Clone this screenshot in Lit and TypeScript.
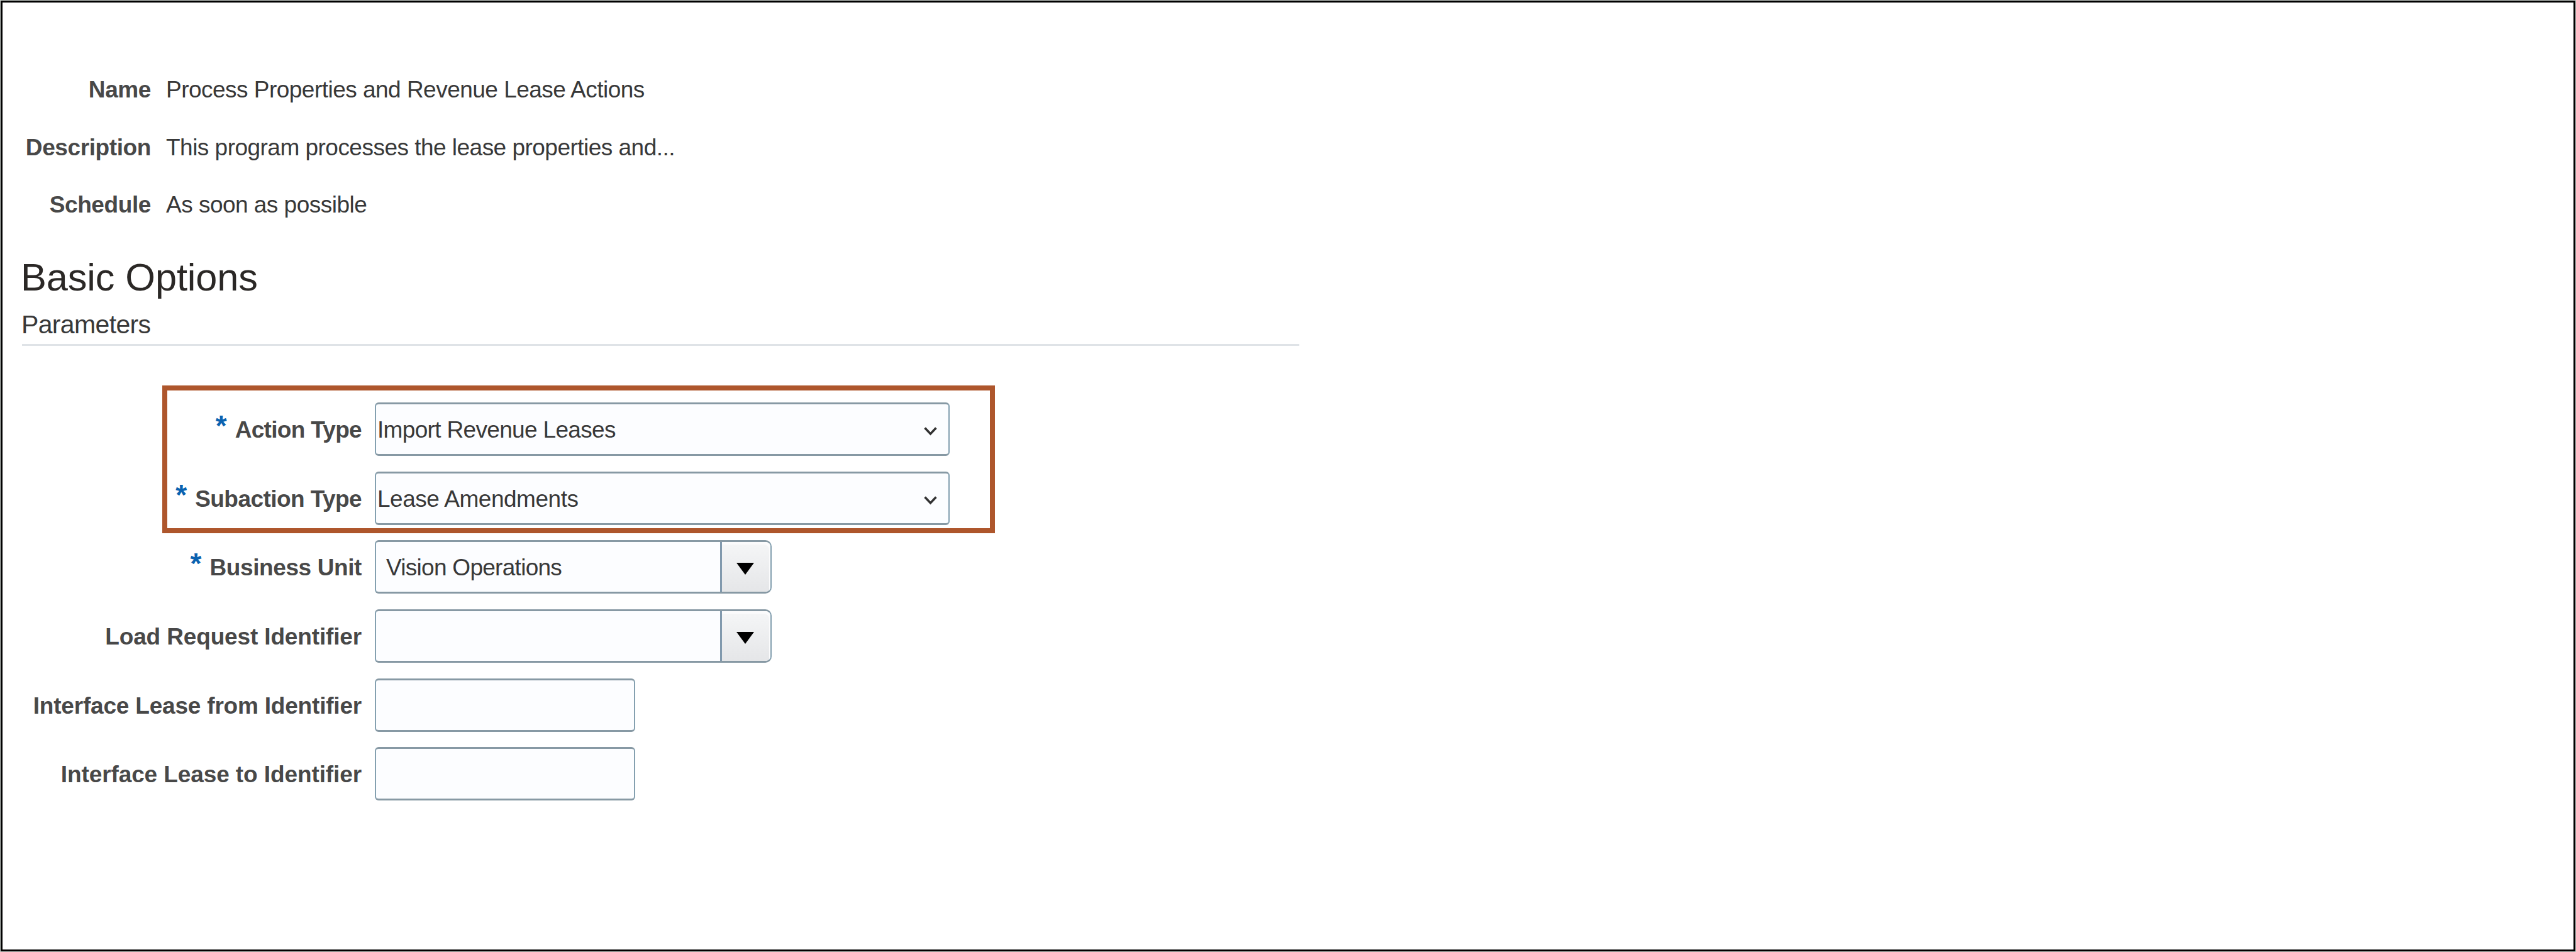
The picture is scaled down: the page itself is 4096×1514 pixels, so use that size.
import { html, css, svg, LitElement, nothing } from 'lit'
import { customElement, property } from 'lit/decorators.js'
import { styleMap } from 'lit/directives/style-map.js'

type Field = {
  label: string
  kind: 'select' | 'combo' | 'input'
  value?: string
  required?: boolean
  tracking: [label: number, value: number] // letter spacing in px
}

const summary = [
  { label: 'Name', value: 'Process Properties and Revenue Lease Actions' },
  { label: 'Description', value: 'This program processes the lease properties and...' },
  { label: 'Schedule', value: 'As soon as possible' }
]

const fields: Field[] = [
  { label: 'Action Type', kind: 'select', value: 'Import Revenue Leases', required: true, tracking: [-0.7, -0.67] },
  { label: 'Subaction Type', kind: 'select', value: 'Lease Amendments', required: true, tracking: [-0.57, -0.47] },
  { label: 'Business Unit', kind: 'combo', value: 'Vision Operations', required: true, tracking: [-0.4, -0.72] },
  { label: 'Load Request Identifier', kind: 'combo', tracking: [-0.15, 0] },
  { label: 'Interface Lease from Identifier', kind: 'input', tracking: [-0.2, 0] },
  { label: 'Interface Lease to Identifier', kind: 'input', tracking: [-0.1, 0] }
]

const chevron = svg`<path d="M1.6 1.6 L10.5 11 L19.4 1.6" fill="none" stroke="#333" stroke-width="3.6" />`
const triangle = svg`<path d="M0 0 H28 L14 19 Z" fill="#000" />`

@customElement('form-field')
export class FormField extends LitElement {
  @property() label = ''
  @property() kind = 'input'
  @property() value = ''
  @property({ type: Boolean }) required = false
  @property({ type: Array }) tracking = [0, 0]

  static styles = css`
    :host {
      display: grid;
      grid-template-columns: 540px auto;
      justify-content: start;
      column-gap: 21px;
      height: 85px;
      line-height: 87px;
      white-space: nowrap;
    }

    .label {
      display: flex;
      justify-content: flex-end;
      color: #484848;
      font-weight: bold;
    }

    .star {
      margin-right: 13px;
      color: #0a62b0;
      font-size: 46px;
      line-height: 74px;
      letter-spacing: 0;
    }

    .control {
      display: flex;
      box-sizing: border-box;
      height: 85px;
      line-height: 81px;
      border: 2px solid #84a0b0;
      border-width: 3px 2px;
      border-color: #8799a4 #84a0b0;
      border-radius: 6px;
      background: #fcfdff;
      color: #383838;
    }

    .control.select {
      width: 914px;
      padding: 0 18px 0 2px;
      justify-content: space-between;
    }

    .control.combo {
      width: 631px;
      border-radius: 6px 10px 10px 6px;
    }

    .control.input {
      width: 414px;
    }

    .control.combo .text {
      flex: 1;
      padding-left: 16px;
    }

    .drop {
      display: flex;
      align-items: center;
      justify-content: center;
      box-sizing: border-box;
      width: 80px;
      height: 79px;
      padding: 6px 4px 0 0;
      border-left: 3px solid #8199ad;
      border-radius: 0 8px 8px 0;
      background: linear-gradient(#f5f6f7, #e5e6e8);
      box-shadow: inset -2px 4px 0 #fbfbfc;
    }

    svg {
      display: block;
    }

    .chevron {
      margin-top: 36px;
    }
  `

  renderControl() {
    const text = html`<span class="text" style=${styleMap({ letterSpacing: `${this.tracking[1]}px` })}>${this.value}</span>`
    if (this.kind === 'select') {
      return html`
        <div class="control select">
          ${text}
          <svg class="chevron" width="21" height="14" viewBox="0 0 21 14">${chevron}</svg>
        </div>
      `
    }
    if (this.kind === 'combo') {
      return html`
        <div class="control combo">
          ${text}
          <span class="drop"><svg width="28" height="19" viewBox="0 0 28 19">${triangle}</svg></span>
        </div>
      `
    }
    return html`<div class="control input">${this.value}</div>`
  }

  render() {
    return html`
      <div class="label">
        ${this.required ? html`<span class="star">*</span>` : nothing}
        <span style=${styleMap({ letterSpacing: `${this.tracking[0]}px` })}>${this.label}</span>
      </div>
      ${this.renderControl()}
    `
  }
}

@customElement('app-root')
export class AppRoot extends LitElement {
  static styles = css`
    :host {
      display: block;
      box-sizing: border-box;
      height: 1514px;
      border: 1px solid #c6ccc8;
      background: #fff;
      color: #383838;
      font: 37px 'Liberation Sans', Arial, sans-serif;
    }

    .page {
      box-sizing: border-box;
      height: 100%;
      padding: 93px 31px 0;
      border: 3px solid #000;
    }

    .summary {
      display: grid;
      grid-template-columns: 205px auto;
      grid-template-rows: 92px 92px 90px;
      column-gap: 24px;
      align-items: center;
      justify-content: start;
      margin: 0;
      white-space: nowrap;
    }

    dt {
      color: #484848;
      font-weight: bold;
      letter-spacing: -0.4px;
      text-align: right;
    }

    dd {
      margin: 0;
      letter-spacing: -0.52px;
    }

    h1 {
      margin: 34px 0 0;
      color: #2b2826;
      font-size: 61.3px;
      font-weight: normal;
      line-height: 72px;
      letter-spacing: -0.1px;
      text-indent: -2px;
    }

    h2 {
      width: 2031px;
      margin: 15px 0 0;
      padding-bottom: 7px;
      border-bottom: 3px solid #dfe3e7;
      font-size: 41px;
      font-weight: normal;
      line-height: 48px;
      letter-spacing: -0.65px;
      text-indent: -1px;
    }

    .fields {
      position: relative;
      display: grid;
      grid-auto-rows: 109.65px;
      margin-top: 90px;
    }

    /* callout frame drawn over the first two rows */
    .callout {
      position: absolute;
      top: -27px;
      left: 223px;
      box-sizing: border-box;
      width: 1324px;
      height: 235px;
      border: 8px solid #ae562c;
    }
  `

  render() {
    return html`
      <div class="page">
        <dl class="summary">
          ${summary.map(
            (item) => html`
              <dt>${item.label}</dt>
              <dd>${item.value}</dd>
            `
          )}
        </dl>
        <h1>Basic Options</h1>
        <h2>Parameters</h2>
        <div class="fields">
          ${fields.map(
            (field) => html`
              <form-field
                .label=${field.label}
                .kind=${field.kind}
                .value=${field.value ?? ''}
                .required=${field.required ?? false}
                .tracking=${field.tracking}
              ></form-field>
            `
          )}
          <div class="callout"></div>
        </div>
      </div>
    `
  }
}
